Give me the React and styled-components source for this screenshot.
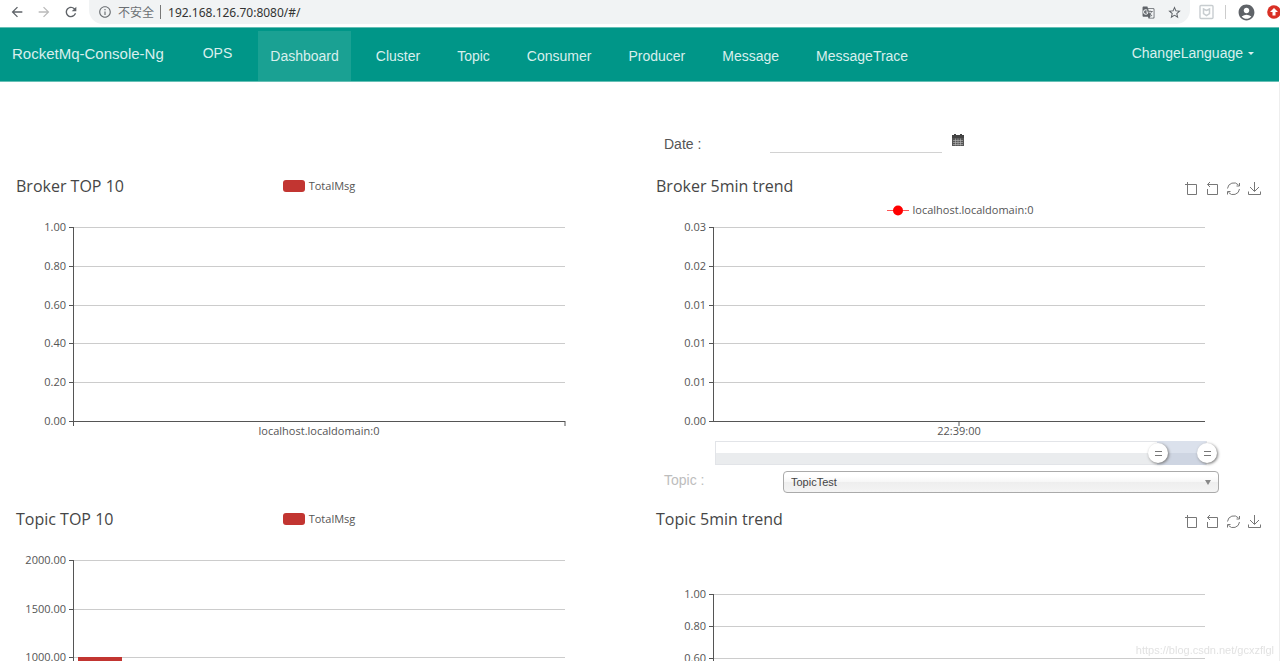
import React, { useState } from 'react';
import styled, { createGlobalStyle } from 'styled-components';
import {
  MdAccountCircle,
  MdArrowBack,
  MdArrowForward,
  MdGTranslate,
  MdInfoOutline,
  MdRefresh,
  MdStarBorder,
} from 'react-icons/md';

const GlobalStyle = createGlobalStyle`
  * {
    box-sizing: border-box;
  }
  body {
    margin: 0;
    background: #fff;
    color: #555;
    font-family: "Liberation Sans", Arial, sans-serif;
    font-size: 14px;
    overflow: hidden;
  }
`;

const Page = styled.div`
  height: 100vh;
  overflow: hidden;
  display: flex;
  flex-direction: column;
`;

/* browser bar */
const BrowserBar = styled.header`
  flex: none;
  display: flex;
  align-items: center;
  gap: 9px;
  height: 27px;
  padding: 0 0 3px 8px;
  color: #5f6368;
`;
const IconButton = styled.button`
  display: flex;
  padding: 1px;
  border: none;
  background: none;
  font-size: ${({ $size }) => $size || 16}px;
  color: ${({ $color }) => $color || '#5f6368'};
  cursor: pointer;
`;
const AddressBar = styled.div`
  flex: 1;
  display: flex;
  align-items: center;
  gap: 6px;
  height: 24px;
  padding: 0 7px 0 9px;
  border-radius: 0 0 14px 14px;
  background: #f1f3f4;
  font: 12px "Noto Sans", "Noto Sans CJK SC", sans-serif;
  color: #6b6f73;
`;
const Url = styled.input`
  flex: 1;
  min-width: 0;
  padding: 0 0 0 1px;
  border: none;
  outline: none;
  background: none;
  font: inherit;
  color: #333;
`;
const Separator = styled.span`
  width: 1px;
  height: 14px;
  background: ${({ $light }) => ($light ? '#ccc' : '#777')};
`;
const BarTools = styled.div`
  display: flex;
  align-items: center;
  gap: 10px;
`;

/* nav */
const Navbar = styled.nav`
  flex: none;
  display: flex;
  align-items: center;
  height: 55px;
  margin-right: 1px;
  padding-left: 12px;
  border-top: 1px solid #66bfb5;
  border-bottom: 1px solid #66bfb5;
  background: #009688;
`;
const NavLink = styled.a`
  margin-right: ${({ $gap }) => $gap || 0}px;
  padding-bottom: 3px;
  font-size: ${({ $brand }) => ($brand ? 15 : 14)}px;
  color: #d9efed;
  text-decoration: none;
`;
const Tabs = styled.div`
  flex: 1;
  align-self: stretch;
  display: flex;
  gap: 13px;
  padding-top: 3px;
`;
const Tab = styled.a`
  display: flex;
  align-items: center;
  padding: 0 12px;
  background: ${({ $active }) => ($active ? '#1aa193' : 'transparent')};
  color: #d9efed;
  text-decoration: none;
`;
const Language = styled.button`
  display: flex;
  align-items: center;
  gap: 5px;
  padding: 0 25px 3px 0;
  border: none;
  background: none;
  font: inherit;
  color: #d9efed;
  cursor: pointer;
  &::after {
    content: '';
    border: 3px solid transparent;
    border-top-color: #d9efed;
    border-bottom: none;
  }
`;

/* content */
const Content = styled.main`
  flex: 1;
  min-height: 0;
  display: grid;
  grid-template-columns: 1fr 1fr;
  grid-template-rows: 92px 333px 333px;
  box-shadow: inset -1px 0 #eee;
`;
const DateRow = styled.div`
  grid-column: 2;
  display: flex;
  align-items: flex-start;
  padding: 51px 0 0 24px;
`;
const DateLabel = styled.label`
  width: 106px;
  line-height: 22px;
`;
const DateInput = styled.input`
  width: 172px;
  height: 20px;
  margin-right: 10px;
  padding: 0;
  border: none;
  border-bottom: 1px solid #d2d2d2;
  outline: none;
  background: transparent;
`;
const CalendarButton = styled.button`
  padding: 1px 0 0;
  border: none;
  background: none;
  line-height: 0;
  cursor: pointer;
`;
const Panel = styled.section`
  font-family: "Open Sans", "Noto Sans", sans-serif;
  min-width: 0;
`;
const PanelHead = styled.div`
  display: grid;
  grid-template-columns: 1fr auto 1fr;
  align-items: center;
  height: 24px;
  padding: 0 18px 0 16px;
`;
const Title = styled.h2`
  margin: 0;
  font-size: 16px;
  font-weight: 400;
  color: #464646;
`;
const LegendRow = styled.div`
  display: flex;
  justify-content: center;
  align-items: center;
  height: 24px;
`;
const Legend = styled.button`
  display: flex;
  align-items: center;
  gap: 4px;
  padding: 0;
  border: none;
  background: none;
  font: 11px "Open Sans", "Noto Sans", sans-serif;
  line-height: 16px;
  color: #555;
`;
const Swatch = styled.span`
  width: 22px;
  height: 12px;
  border-radius: 3px;
  background: #c23531;
`;
const Toolbox = styled.div`
  justify-self: end;
  display: flex;
  gap: 7px;
  padding-top: 5px;
`;
const ToolButton = styled.button`
  width: 14px;
  height: 14px;
  padding: 0;
  border: none;
  background: none;
  line-height: 0;
  cursor: pointer;
`;
const ChartBox = styled.div`
  padding-right: 75px;
  svg {
    display: block;
    width: 100%;
    height: 219px;
    overflow: visible;
  }
  text {
    font-size: 11px;
    fill: #555;
  }
`;
const Zoom = styled.div`
  position: relative;
  height: 24px;
  margin: 0 73px 6px 75px;
  border: 1px solid #e2e4e8;
  background: linear-gradient(#fff 50%, #eaecee 50%);
`;
const ZoomWindow = styled.div`
  position: absolute;
  top: -1px;
  bottom: -1px;
  background: linear-gradient(#dbe1ec 50%, #ced5e2 50%);
`;
const ZoomInput = styled.input`
  position: absolute;
  left: -11px;
  top: 1px;
  width: calc(100% + 22px);
  height: 20px;
  margin: 0;
  appearance: none;
  background: none;
  pointer-events: none;
  &::-webkit-slider-thumb {
    appearance: none;
    width: 20px;
    height: 20px;
    border-radius: 50%;
    background:
      linear-gradient(#777, #777) 7px 8px / 7px 1px no-repeat,
      linear-gradient(#777, #777) 7px 12px / 7px 1px no-repeat,
      #fff;
    box-shadow: 1px 1px 3px #777;
    pointer-events: auto;
  }
`;
const TopicRow = styled.div`
  display: flex;
  padding: 0 61px 0 24px;
  font-family: "Liberation Sans", Arial, sans-serif;
`;
const TopicLabel = styled.label`
  width: 119px;
  line-height: 19px;
  color: #bdbdbd;
`;
const SelectBox = styled.div`
  position: relative;
  flex: 1;
  &::after {
    content: '';
    position: absolute;
    right: 8px;
    top: 9px;
    border: 3px solid transparent;
    border-top: 5px solid #888;
    border-bottom: none;
    pointer-events: none;
  }
`;
const Select = styled.select`
  display: block;
  width: 100%;
  height: 22px;
  padding: 0 7px;
  appearance: none;
  border: 1px solid #aaa;
  border-radius: 4px;
  background: linear-gradient(#fff 20%, #f6f6f6 50%, #eee 52%, #f4f4f4 100%);
  font: 11px "Liberation Sans", Arial, sans-serif;
  color: #444;
`;
const Watermark = styled.span`
  position: fixed;
  right: 6px;
  bottom: 5px;
  font-size: 11px;
  color: #e2e2e2;
`;

const ShieldIcon = () => (
  <svg width="16" height="16" viewBox="0 0 16 16" fill="none" stroke="#c8cdd0">
    <rect x="1" y="1.5" width="13" height="13" rx="1" strokeWidth="1.4" />
    <path d="M4.5 5l3 1.5 3-1.5v4.5l-3 2-3-2z" strokeWidth="1.5" />
  </svg>
);

const UpdateIcon = () => (
  <svg width="13" height="14" viewBox="0 0 13 14">
    <circle cx="7" cy="7" r="6.8" fill="#d93025" />
    <path d="M7 3l4 4H8.500v3.500h-3V7H3z" fill="#fff" />
  </svg>
);

const CalendarIcon = () => (
  <svg width="12" height="13" viewBox="0 0 12 13">
    <path d="M0 1h2V0h2v1h4V0h2v1h2v3H0z" fill="#444" />
    <rect y="4" width="12" height="8" fill="#555" />
    <path d="M1 6.500h10M1 8.500h10M1 10.500h10M3.500 4.500v7M6 4.500v7M8.500 4.500v7" stroke="#bbb" strokeWidth=".6" />
  </svg>
);

const tools = [
  ['Zoom', 'M0 2.500h11.500v10H2.500V0'],
  ['Zoom reset', 'M4 0L1.500 2.500l2.500 2.500M1.500 2.500h10v10H1.500V7'],
  ['Restore', 'M0.500 6.500A6.300 6.300 0 0 1 11.500 3M12.500 1v3H9.500M12.500 7A6.300 6.300 0 0 1 1.500 10.500M0.500 12.500v-3h3'],
  ['Save as image', 'M6.500 0v9M2 5l4.500 4.500L11 5M0.500 9.500v3h12v-3'],
];

const Tools = () => (
  <Toolbox>
    {tools.map(([name, d]) => (
      <ToolButton key={name} aria-label={name}>
        <svg width="14" height="14" viewBox="0 0 14 14" fill="none" stroke="#777">
          <path d={d} />
        </svg>
      </ToolButton>
    ))}
  </Toolbox>
);

const LineLegend = ({ name }) => (
  <Legend>
    <svg width="22" height="12" viewBox="0 0 22 12">
      <path d="M0 6.500h22" stroke="#f55" />
      <circle cx="11" cy="6.500" r="5" fill="#f00" />
    </svg>
    {name}
  </Legend>
);

// plot area starts 73px in, so the tick labels have room on the left
const Chart = ({ ticks, top = 5, height = 194, label, ends, bar }) => {
  const step = height / (ticks.length - 1);
  const bottom = top + height;
  return (
    <ChartBox>
      <svg>
        {ticks.map((tick, i) => {
          const y = Math.round(top + i * step) + 0.5;
          const last = i === ticks.length - 1;
          return (
            <g key={i}>
              <line x1="73" x2="100%" y1={y} y2={y} stroke={last ? '#555' : '#ccc'} />
              <line x1="69" x2="73" y1={y} y2={y} stroke="#555" />
              <text x="66" y={y + 3} textAnchor="end">{tick}</text>
            </g>
          );
        })}
        {bar && <rect x="78" y={bar} width="44" height={bottom - bar} fill="#c23531" />}
        <line x1="73.500" x2="73.500" y1={top} y2={bottom + (ends ? 5 : 1)} stroke="#555" />
        {ends && <line x1="100%" x2="100%" y1={bottom} y2={bottom + 5} stroke="#555" />}
        {label && (
          // nested svg spans the plot only, so 50% is its middle
          <svg x="73" style={{ width: 'calc(100% - 73px)' }}>
            {!ends && <line x1="50%" x2="50%" y1={bottom} y2={bottom + 5} stroke="#555" />}
            <text x="50%" y={bottom + 14} textAnchor="middle">{label}</text>
          </svg>
        )}
      </svg>
    </ChartBox>
  );
};

const tabs = ['Dashboard', 'Cluster', 'Topic', 'Consumer', 'Producer', 'Message', 'MessageTrace'];

export default function App() {
  const [active, setActive] = useState('Dashboard');
  const [start, setStart] = useState(90);
  const [end, setEnd] = useState(100);

  return (
    <Page>
      <GlobalStyle />
      <BrowserBar>
        <IconButton aria-label="Back"><MdArrowBack /></IconButton>
        <IconButton aria-label="Forward" $color="#bbb"><MdArrowForward /></IconButton>
        <IconButton aria-label="Reload"><MdRefresh /></IconButton>
        <AddressBar>
          <MdInfoOutline size={14} />
          <span>不安全</span>
          <Separator />
          <Url aria-label="Address" defaultValue="192.168.126.70:8080/#/" />
          <BarTools>
            <IconButton aria-label="Translate" $size={13}><MdGTranslate /></IconButton>
            <IconButton aria-label="Bookmark" $size={15}><MdStarBorder /></IconButton>
          </BarTools>
        </AddressBar>
        <BarTools>
          <ShieldIcon />
          <Separator $light />
          <IconButton aria-label="Account" $size={19}><MdAccountCircle /></IconButton>
          <UpdateIcon />
        </BarTools>
      </BrowserBar>

      <Navbar>
        <NavLink href="#/" $brand $gap={39}>RocketMq-Console-Ng</NavLink>
        <NavLink href="#/ops" $gap={26}>OPS</NavLink>
        <Tabs>
          {tabs.map((tab) => (
            <Tab key={tab} href="#/" $active={tab === active} onClick={() => setActive(tab)}>
              {tab}
            </Tab>
          ))}
        </Tabs>
        <Language>ChangeLanguage</Language>
      </Navbar>

      <Content>
        <DateRow>
          <DateLabel htmlFor="date">Date :</DateLabel>
          <DateInput id="date" type="text" />
          <CalendarButton aria-label="Pick a date"><CalendarIcon /></CalendarButton>
        </DateRow>

        <Panel>
          <PanelHead>
            <Title>Broker TOP 10</Title>
            <Legend><Swatch />TotalMsg</Legend>
          </PanelHead>
          <LegendRow />
          <Chart ticks={['1.00', '0.80', '0.60', '0.40', '0.20', '0.00']} label="localhost.localdomain:0" ends />
        </Panel>

        <Panel>
          <PanelHead>
            <Title>Broker 5min trend</Title>
            <span />
            <Tools />
          </PanelHead>
          <LegendRow>
            <LineLegend name="localhost.localdomain:0" />
          </LegendRow>
          <Chart ticks={['0.03', '0.02', '0.01', '0.01', '0.01', '0.00']} label="22:39:00" />
          <Zoom>
            <ZoomWindow style={{ left: `${start}%`, right: `${100 - end}%` }} />
            <ZoomInput
              type="range"
              aria-label="Range start"
              value={start}
              onChange={(e) => setStart(Math.min(+e.target.value, end))}
            />
            <ZoomInput
              type="range"
              aria-label="Range end"
              value={end}
              onChange={(e) => setEnd(Math.max(+e.target.value, start))}
            />
          </Zoom>
          <TopicRow>
            <TopicLabel htmlFor="topic">Topic :</TopicLabel>
            <SelectBox>
              <Select id="topic">
                <option>TopicTest</option>
              </Select>
            </SelectBox>
          </TopicRow>
        </Panel>

        <Panel>
          <PanelHead>
            <Title>Topic TOP 10</Title>
            <Legend><Swatch />TotalMsg</Legend>
          </PanelHead>
          <LegendRow />
          <Chart ticks={['2000.00', '1500.00', '1000.00', '500.00', '0.00']} bar={102} ends />
        </Panel>

        <Panel>
          <PanelHead>
            <Title>Topic 5min trend</Title>
            <span />
            <Tools />
          </PanelHead>
          <LegendRow />
          <Chart ticks={['1.00', '0.80', '0.60', '0.40', '0.20', '0.00']} top={39} height={160} />
        </Panel>
      </Content>
      <Watermark>https://blog.csdn.net/gcxzflgl</Watermark>
    </Page>
  );
}
